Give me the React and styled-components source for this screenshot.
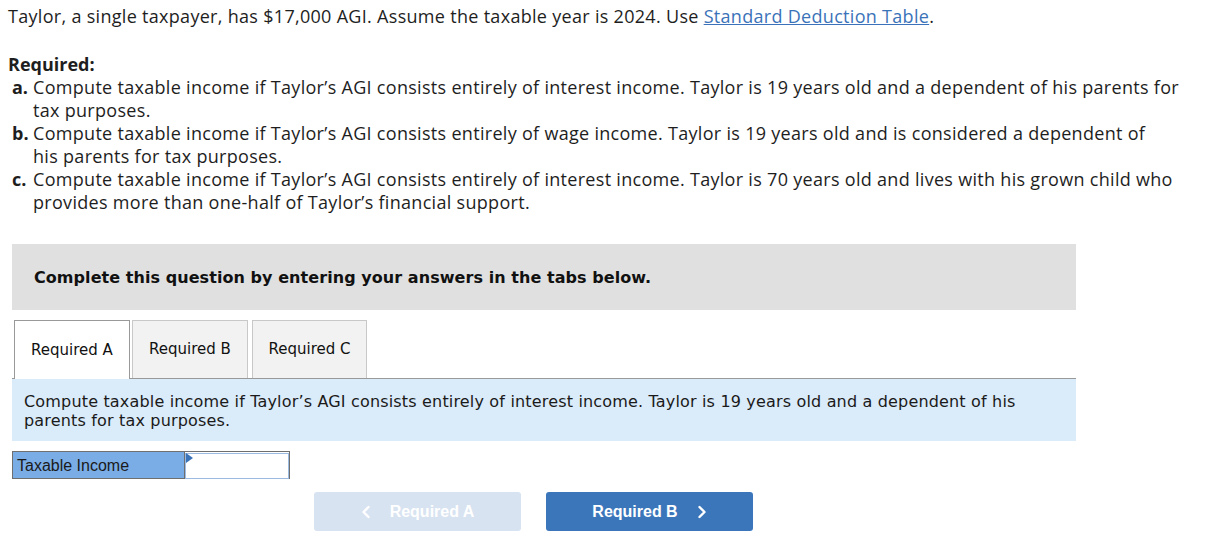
import React from "react";
import styled, { createGlobalStyle } from "styled-components";

const Global = createGlobalStyle`
  body { margin: 0; padding: 0; background: #fff; }
`;

const Page = styled.div`
  padding: 5px 8px 0 8px;
  font-family: "Open Sans", Lato, sans-serif;
  font-size: 18px;
  letter-spacing: 0.3px;
  line-height: 23px;
  color: #1e1e1e;
`;

const Intro = styled.p`
  margin: 0;
`;

const Link = styled.a`
  color: #3b73b9;
  text-decoration: underline;
`;

const RequiredHead = styled.div`
  margin-top: 25px;
  font-weight: 700;
  letter-spacing: 0;
`;

const List = styled.ol`
  list-style: none;
  margin: 0;
  padding: 0;
`;

const Item = styled.li`
  display: flex;
`;

const Letter = styled.span`
  font-weight: 700;
  letter-spacing: 0;
  width: 25px;
  padding-left: 4px;
  box-sizing: border-box;
  flex: none;
`;

const Widget = styled.div`
  margin: 30px 0 0 4px;
  width: 1064px;
  font-family: "DejaVu Sans", Verdana, sans-serif;
  letter-spacing: 0;
`;

const Banner = styled.div`
  background: #e0e0e0;
  height: 66px;
  display: flex;
  align-items: center;
  padding-left: 22px;
  font-weight: 700;
  font-size: 16px;
  letter-spacing: 0.06px;
  color: #111;
  box-sizing: border-box;
`;

const Tabs = styled.div`
  display: flex;
  margin-top: 10px;
  padding-left: 2px;
  border-bottom: 1px solid #999;
  height: 59px;
  box-sizing: border-box;
`;

const Tab = styled.div`
  display: flex;
  align-items: center;
  justify-content: center;
  margin-right: ${p => (p.$active ? "2px" : "4px")};
  font-size: 15px;
  color: #111;
  box-sizing: border-box;
  background: ${p => (p.$active ? "#fff" : "#f2f2f2")};
  border: 1px solid ${p => (p.$active ? "#999" : "#c8c8c8")};
  border-bottom: none;
  height: ${p => (p.$active ? "59px" : "58px")};
  width: ${p => p.$w}px;
  position: relative;
  z-index: 1;
`;

const Panel = styled.div`
  background: #daebf9;
  padding: 13px 12px 11px 12px;
  font-size: 16px;
  letter-spacing: 0.17px;
  line-height: 19px;
  color: #1a1a1a;
`;

const Row = styled.div`
  display: flex;
  margin-top: 10px;
  height: 28px;
`;

const Label = styled.div`
  width: 172px;
  background: #7aade6;
  border: 1px solid #6f6f6f;
  border-right: none;
  box-sizing: border-box;
  font-family: "Liberation Sans", Arial, sans-serif;
  font-size: 16px;
  color: #1a1a1a;
  display: flex;
  align-items: center;
  padding-left: 4px;
`;

const InputWrap = styled.div`
  width: 106px;
  border: 1px solid #6f6f6f;
  box-sizing: border-box;
  position: relative;
  background: #fff;
`;

const Input = styled.input`
  width: 100%;
  height: 100%;
  box-sizing: border-box;
  border: 1px solid #9bbbe3;
  outline: none;
  margin: 0;
`;

const Flag = styled.span`
  position: absolute;
  left: 1px;
  top: 1px;
  width: 0;
  height: 0;
  border-top: 5px solid transparent;
  border-bottom: 5px solid transparent;
  border-left: 7px solid #3b73b9;
`;

const Nav = styled.div`
  display: flex;
  gap: 25px;
  margin-top: 13px;
  padding-left: 302px;
`;

const NavButton = styled.button`
  width: 207px;
  height: 39px;
  border: none;
  border-radius: 3px;
  background: ${p => (p.$disabled ? "#d8e3f1" : "#3b76bb")};
  color: #fff;
  font-family: "Liberation Sans", Arial, sans-serif;
  font-weight: 700;
  font-size: 16px;
  display: flex;
  align-items: center;
  justify-content: center;
  gap: 19px;
  padding: 0;
  cursor: ${p => (p.$disabled ? "default" : "pointer")};
`;

const Chevron = ({ dir }) => (
  <svg width="10" height="14" viewBox="0 0 10 14" fill="none">
    <path
      d={dir === "left" ? "M7.5 2 L2.5 7 L7.5 12" : "M2.5 2 L7.5 7 L2.5 12"}
      stroke="#fff"
      strokeWidth="2.4"
      strokeLinecap="round"
      strokeLinejoin="round"
    />
  </svg>
);

export default function App() {
  return (
    <>
      <Global />
      <Page>
        <Intro>
          Taylor, a single taxpayer, has $17,000 AGI. Assume the taxable year is 2024. Use{" "}
          <Link href="#">Standard Deduction Table</Link>.
        </Intro>
        <RequiredHead>Required:</RequiredHead>
        <List>
          <Item>
            <Letter>a.</Letter>
            <span>
              Compute taxable income if Taylor’s AGI consists entirely of interest income. Taylor is 19 years old and a dependent of his parents for
              <br />
              tax purposes.
            </span>
          </Item>
          <Item>
            <Letter>b.</Letter>
            <span>
              Compute taxable income if Taylor’s AGI consists entirely of wage income. Taylor is 19 years old and is considered a dependent of
              <br />
              his parents for tax purposes.
            </span>
          </Item>
          <Item>
            <Letter>c.</Letter>
            <span>
              Compute taxable income if Taylor’s AGI consists entirely of interest income. Taylor is 70 years old and lives with his grown child who
              <br />
              provides more than one-half of Taylor’s financial support.
            </span>
          </Item>
        </List>
        <Widget>
          <Banner>Complete this question by entering your answers in the tabs below.</Banner>
          <Tabs>
            <Tab $active $w={116}>Required A</Tab>
            <Tab $w={116}>Required B</Tab>
            <Tab $w={115}>Required C</Tab>
          </Tabs>
          <Panel>
            Compute taxable income if Taylor’s AGI consists entirely of interest income. Taylor is 19 years old and a dependent of his parents for tax purposes.
          </Panel>
          <Row>
            <Label>Taxable Income</Label>
            <InputWrap>
              <Input type="text" />
              <Flag />
            </InputWrap>
          </Row>
          <Nav>
            <NavButton $disabled disabled>
              <Chevron dir="left" />
              Required A
            </NavButton>
            <NavButton>
              Required B
              <Chevron dir="right" />
            </NavButton>
          </Nav>
        </Widget>
      </Page>
    </>
  );
}
